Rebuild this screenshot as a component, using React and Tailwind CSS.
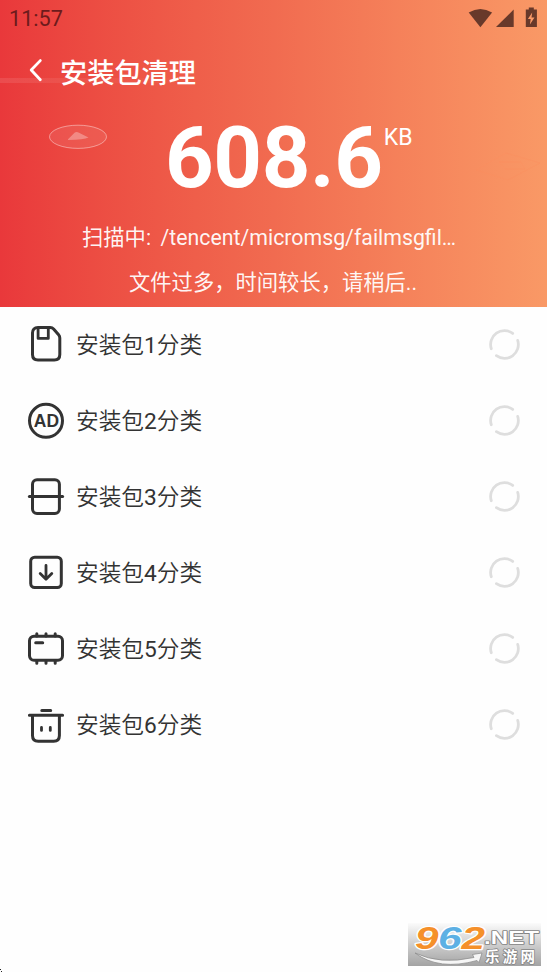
const stroke = {
  fill: 'none',
  stroke: '#333333',
  strokeWidth: 3,
  strokeLinecap: 'round',
  strokeLinejoin: 'round',
}

function FileIcon() {
  return (
    <g {...stroke}>
      <path d="M12 2.6H24.3Q26.3 2.6 27.6 4L32.6 9.8Q33.8 11.2 33.8 13V29.5Q33.8 35 28.3 35H12Q6.5 35 6.5 29.5V8Q6.5 2.6 12 2.6Z" />
      <path d="M12.1 3.5V13.4H22.3V3.5" strokeWidth="2.8" />
    </g>
  )
}

function AdIcon() {
  return (
    <>
      <circle cx="20" cy="19.8" r="16.5" {...stroke} />
      <text
        x="7.8"
        y="25.6"
        textLength="25.2"
        lengthAdjust="spacingAndGlyphs"
        fontSize="17.5"
        fontWeight="700"
        fill="#333333"
        fontFamily="Liberation Sans, sans-serif"
      >
        AD
      </text>
    </>
  )
}

function SplitIcon() {
  return (
    <g {...stroke}>
      <rect x="6.5" y="2.7" width="26.9" height="33.8" rx="4.5" />
      <path d="M3.4 19.6H36.6" />
    </g>
  )
}

function DownloadIcon() {
  return (
    <g {...stroke}>
      <rect x="4.7" y="4.2" width="30.6" height="30.4" rx="4" />
      <path d="M20 12.5V26M14.2 20.5L20 26.2L25.8 20.5" strokeWidth="2.8" />
    </g>
  )
}

function ChipIcon() {
  return (
    <g {...stroke}>
      <rect x="3.5" y="7.3" width="33" height="24" rx="4.5" />
      <path d="M10.8 4.7V7M20 4.7V7M29.2 4.7V7M10.8 32V34.3M20 32V34.3M29.2 32V34.3M9.7 13.7H16.7" strokeWidth="3" />
    </g>
  )
}

function TrashIcon() {
  return (
    <g {...stroke}>
      <path d="M15.8 5.4H24.7M3.4 10.3H36.6M6.5 11V30.5Q6.5 36.2 12.2 36.2H27.7Q33.4 36.2 33.4 30.5V11" />
      <path d="M15.5 22.4V25.4M24.3 22.4V25.4" strokeWidth="2.8" />
    </g>
  )
}

const categories = [FileIcon, AdIcon, SplitIcon, DownloadIcon, ChipIcon, TrashIcon]

function Spinner() {
  return (
    <svg viewBox="0 0 33 33" className="mb-[2px] size-[33px]" fill="none" stroke="#dedede" strokeWidth="2.8" strokeLinecap="round">
      <path d="M24.7 5.4A13.8 13.8 0 0 0 3.3 20.7" />
      <path d="M8.4 27.7A13.8 13.8 0 0 0 29.7 12.4" />
    </svg>
  )
}

function StatusBar() {
  return (
    <div className="flex h-9 items-center justify-between pr-[9px] pl-[9px]">
      <span className="pt-[2px] text-[21.6px] leading-9 text-[#6d1b1c]">11:57</span>
      <svg viewBox="0 0 72 22" className="h-[22px] w-[72px]" fill="#68392a">
        <path d="M2.7 5.6Q14.4 -1.8 26.1 5.6L14.4 20.2Z" />
        <path d="M30 20L47.7 2.6V20Z" />
        <path d="M59.8 2.6H62.8V0.6H67.8V2.6H70.9V20H59.8Z" />
        <path d="M66.2 5.5L61.9 12H64.7L63.9 17.5L68.5 10.5H65.5Z" fill="#fa9a68" />
      </svg>
    </div>
  )
}

function Header() {
  return (
    <header className="relative h-[307px] bg-linear-to-r from-[#e9383b] via-[#f16b50] to-[#f99966] text-white">
      <div className="absolute top-[78px] left-0 h-[5px] w-[190px] bg-linear-to-r from-white/10 to-white/0" />
      <svg viewBox="0 0 60 26" className="absolute top-[124px] left-[48px] h-[26px] w-[60px]">
        <ellipse cx="30" cy="12.8" rx="28.5" ry="11.6" fill="#ffffff" fillOpacity="0.08" stroke="#ffffff" strokeOpacity="0.42" />
        <path d="M20 15.2L26.5 8.8Q28.5 7.3 31 8.8L40.5 13.5Q36 15.8 20 16Z" fill="#ffffff" fillOpacity="0.3" />
      </svg>
      <svg viewBox="0 0 66 30" className="absolute top-[152px] left-[475px] h-[30px] w-[66px]" fill="none" stroke="#ff8a5c" strokeOpacity="0.25">
        <path d="M1 18L31 1L65 11L33 28Z" />
        <path d="M24 10H46L50 17H30Z" />
      </svg>
      <StatusBar />
      <div className="flex h-[72px] items-center pl-[28px]">
        <svg viewBox="0 0 16 26" className="-mt-[4px] h-[26px] w-4" fill="none" stroke="#ffffff" strokeWidth="2.8" strokeLinecap="round" strokeLinejoin="round">
          <path d="M12.3 3.6L3.2 13L12.3 22.8" />
        </svg>
        <h1 className="mt-1 ml-4 text-[27.2px] font-medium">安装包清理</h1>
      </div>
      <div className="flex h-[96px] items-start pl-[165px]">
        <span className="mt-[2px] text-[85px] leading-[96px] font-bold tracking-[-0.4px]">608.6</span>
        <span className="mt-[15px] ml-[1px] text-[23px] leading-[30px]">KB</span>
      </div>
      <div className="flex flex-col pt-[11px] text-[21.3px] leading-[45px] text-white/95">
        <p className="flex h-[45px] pl-[82px]">
          <span>扫描中:</span>
          <span className="ml-[9.5px]">/tencent/micromsg/failmsgfil…</span>
        </p>
        <p className="h-[45px] pl-[129px]">文件过多，时间较长，请稍后..</p>
      </div>
    </header>
  )
}

function Watermark() {
  return (
    <div className="absolute top-[923px] left-[408px] h-[43px] w-[133px] bg-linear-to-b from-[#fbfbfb] to-[#a3a3a3]">
      <svg viewBox="0 0 133 43" className="h-[43px] w-[133px] overflow-visible" fontWeight="700">
        <path d="M7 30Q32 42 66 34.5L64.5 31.5L74 30L71 39.5L69 37.5Q31 48 7 30Z" fill="#f6f6f6" stroke="#888888" strokeWidth="0.7" />
        <g fontSize="32" fontStyle="italic" fontFamily="Liberation Sans, sans-serif" stroke="#ffffff" strokeWidth="2.5" paintOrder="stroke" strokeLinejoin="round">
          <text x="7" y="25.5" textLength="23.5" lengthAdjust="spacingAndGlyphs" fill="#f5902a">9</text>
          <text x="30" y="25.5" textLength="23.5" lengthAdjust="spacingAndGlyphs" fill="#5db0e4">6</text>
          <text x="53.5" y="25.5" textLength="23.5" lengthAdjust="spacingAndGlyphs" fill="#f5902a">2</text>
        </g>
        <g fill="#ffffff" fontFamily="Liberation Sans, Noto Sans CJK SC, sans-serif" stroke="#858585" strokeWidth="1.6" paintOrder="stroke" strokeLinejoin="round">
          <text x="76" y="20.5" fontSize="17.5" textLength="55" lengthAdjust="spacingAndGlyphs">.NET</text>
          <text x="77" y="38.5" fontSize="14.5" textLength="50">乐游网</text>
        </g>
      </svg>
    </div>
  )
}

export default function App() {
  return (
    <main className="relative h-[972px] w-[547px] overflow-hidden bg-[#fefefe] font-['Roboto','Noto_Sans_CJK_SC',sans-serif]">
      <Header />
      <ul>
        {categories.map((Icon, i) => (
          <li key={i} className="flex h-[76px] items-center pr-[26px] pl-[26px]">
            <svg viewBox="0 0 40 40" className="size-10">
              <Icon />
            </svg>
            <span className="mt-[3px] ml-[10px] flex-1 text-[22.7px] font-[350] text-[#333333]">
              安装包<span className="font-normal">{i + 1}</span>分类
            </span>
            <Spinner />
          </li>
        ))}
      </ul>
      <Watermark />
      <svg viewBox="0 0 3 4" className="absolute bottom-0 left-0 h-1 w-[3px]" fill="#222222">
        <path d="M0 1H1V2H0ZM1 3H2V4H1Z" />
      </svg>
    </main>
  )
}
